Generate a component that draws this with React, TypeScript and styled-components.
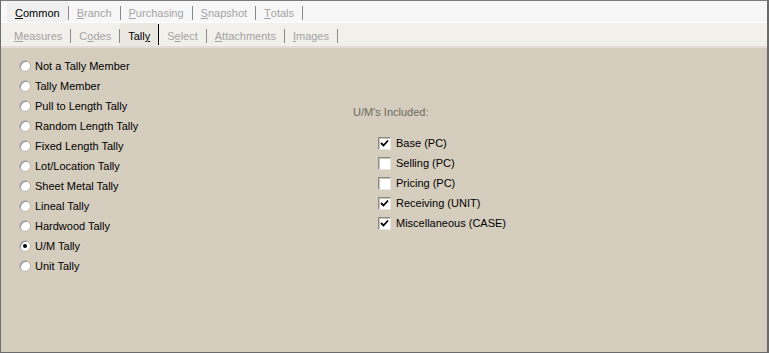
import styled, { createGlobalStyle } from 'styled-components';

const GlobalStyle = createGlobalStyle`
  html, body {
    margin: 0;
    padding: 0;
    background: #ffffff;
  }
  body {
    font-family: "Liberation Sans", Arial, sans-serif;
    font-size: 11px;
  }
`;

const Frame = styled.div`
  box-sizing: border-box;
  width: 769px;
  height: 353px;
  border-top: 1px solid #7a7a7a;
  border-left: 1px solid #6e6e6e;
  border-right: 2px solid #6a6a6a;
  border-bottom: 1px solid #6a6a6a;
  display: flex;
  flex-direction: column;
  background: #d5cdbd;
`;

const TabRow = styled.div<{ $level: number }>`
  box-sizing: border-box;
  display: flex;
  align-items: stretch;
  padding-left: ${(p) => (p.$level === 1 ? 6 : 5)}px;
  height: ${(p) => (p.$level === 1 ? 22 : 25)}px;
  background: ${(p) => (p.$level === 1 ? '#f7f7f7' : '#f2f0eb')};
  border-bottom: ${(p) => (p.$level === 1 ? '1px solid #ffffff' : '2px solid #e3ded5')};
`;

const Tab = styled.div<{ $active?: boolean }>`
  display: flex;
  align-items: center;
  padding: 3px 8px 0;
  color: ${(p) => (p.$active ? '#000000' : '#a3a3a3')};
  background: ${(p) => (p.$active ? '#ebe8e1' : 'transparent')};
  white-space: nowrap;
`;

const TopTab = styled(Tab)`
  padding-top: 2px;
  background: ${(p) => (p.$active ? '#f0f0f0' : 'transparent')};
`;

const Mnemonic = styled.span`
  text-decoration: underline;
`;

const Sep = styled.div<{ $dark?: boolean }>`
  align-self: center;
  width: 1px;
  height: ${(p) => (p.$dark ? 21 : 14)}px;
  margin-top: ${(p) => (p.$dark ? 0 : 2)}px;
  background: ${(p) => (p.$dark ? '#000000' : '#8a8a8a')};
`;

const Body = styled.div`
  flex: 1;
  display: grid;
  grid-template-columns: 334px 1fr;
  padding: 8px 0 0 18px;
`;

const RadioList = styled.div`
  display: flex;
  flex-direction: column;
`;

const OptionRow = styled.label`
  display: flex;
  align-items: center;
  height: 20px;
  color: #000000;
  white-space: nowrap;
`;

const RadioDot = styled.span<{ $checked?: boolean }>`
  box-sizing: border-box;
  width: 12px;
  height: 12px;
  margin-right: 4px;
  border-radius: 50%;
  background: #ffffff;
  border: 1px solid #b9b3a7;
  box-shadow: inset 1px 1px 0 #8c8c8c;
  display: flex;
  align-items: center;
  justify-content: center;
  &::after {
    content: '';
    width: 4px;
    height: 4px;
    border-radius: 50%;
    background: ${(p) => (p.$checked ? '#000000' : 'transparent')};
  }
`;

const UmPanel = styled.div`
  display: flex;
  flex-direction: column;
  padding-top: 50px;
`;

const UmLabel = styled.div`
  color: #6f6a61;
  height: 13px;
  line-height: 13px;
  margin-bottom: 14px;
`;

const CheckList = styled.div`
  display: flex;
  flex-direction: column;
  padding-left: 25px;
`;

const CheckBox = styled.span`
  box-sizing: border-box;
  width: 13px;
  height: 13px;
  margin-right: 5px;
  background: #ffffff;
  border-top: 1px solid #8a8a8a;
  border-left: 1px solid #8a8a8a;
  border-right: 1px solid #e8e4dc;
  border-bottom: 1px solid #e8e4dc;
  box-shadow: inset 1px 1px 0 #c9c4ba;
  display: flex;
  align-items: center;
  justify-content: center;
`;

const radios = [
  'Not a Tally Member',
  'Tally Member',
  'Pull to Length Tally',
  'Random Length Tally',
  'Fixed Length Tally',
  'Lot/Location Tally',
  'Sheet Metal Tally',
  'Lineal Tally',
  'Hardwood Tally',
  'U/M Tally',
  'Unit Tally',
];

const ums = [
  { label: 'Base (PC)', checked: true },
  { label: 'Selling (PC)', checked: false },
  { label: 'Pricing (PC)', checked: false },
  { label: 'Receiving (UNIT)', checked: true },
  { label: 'Miscellaneous (CASE)', checked: true },
];

const Check = () => (
  <svg width="9" height="9" viewBox="0 0 9 9">
    <path d="M1 4 L3.5 6.5 L8 1.5" fill="none" stroke="#000" strokeWidth="1.8" />
  </svg>
);

// label with one underlined letter, like a windows mnemonic
const Mn = ({ text, at }: { text: string; at: number }) => (
  <>
    {text.slice(0, at)}
    <Mnemonic>{text[at]}</Mnemonic>
    {text.slice(at + 1)}
  </>
);

export default function App() {
  return (
    <>
      <GlobalStyle />
      <Frame>
        <TabRow $level={1}>
          <TopTab $active>
            <Mn text="Common" at={0} />
          </TopTab>
          <Sep />
          <TopTab>
            <Mn text="Branch" at={0} />
          </TopTab>
          <Sep />
          <TopTab>
            <Mn text="Purchasing" at={0} />
          </TopTab>
          <Sep />
          <TopTab>
            <Mn text="Snapshot" at={0} />
          </TopTab>
          <Sep />
          <TopTab>
            <Mn text="Totals" at={0} />
          </TopTab>
          <Sep />
        </TabRow>
        <TabRow $level={2}>
          <Tab>
            <Mn text="Measures" at={0} />
          </Tab>
          <Sep />
          <Tab>
            <Mn text="Codes" at={1} />
          </Tab>
          <Sep />
          <Tab $active>
            <Mn text="Tally" at={4} />
          </Tab>
          <Sep $dark />
          <Tab>
            <Mn text="Select" at={1} />
          </Tab>
          <Sep />
          <Tab>
            <Mn text="Attachments" at={0} />
          </Tab>
          <Sep />
          <Tab>
            <Mn text="Images" at={0} />
          </Tab>
          <Sep />
        </TabRow>
        <Body>
          <RadioList>
            {radios.map((r) => (
              <OptionRow key={r}>
                <RadioDot $checked={r === 'U/M Tally'} />
                {r}
              </OptionRow>
            ))}
          </RadioList>
          <UmPanel>
            <UmLabel>U/M's Included:</UmLabel>
            <CheckList>
              {ums.map((u) => (
                <OptionRow key={u.label}>
                  <CheckBox>{u.checked && <Check />}</CheckBox>
                  {u.label}
                </OptionRow>
              ))}
            </CheckList>
          </UmPanel>
        </Body>
      </Frame>
    </>
  );
}
